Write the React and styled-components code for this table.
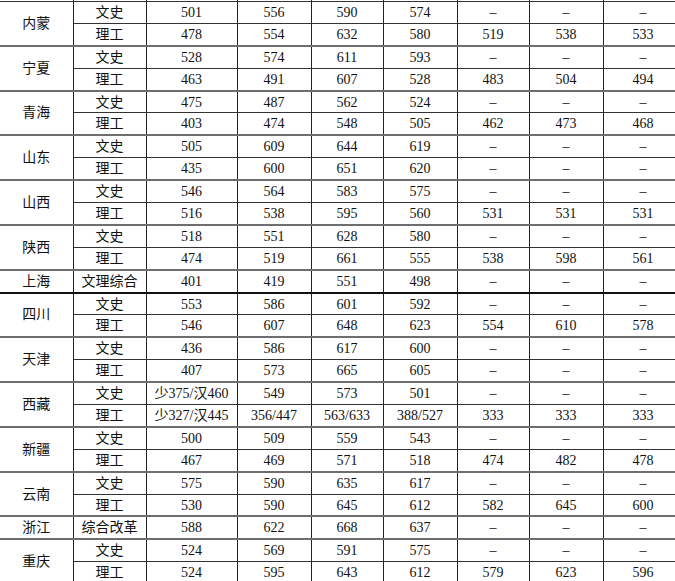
import styled, { createGlobalStyle } from 'styled-components';

const GlobalStyle = createGlobalStyle`
  html, body {
    margin: 0;
    padding: 0;
    background: #ffffff;
  }
`;

const Page = styled.div`
  width: 675px;
  height: 581px;
  overflow: hidden;
  background: #ffffff;
`;

const Table = styled.table`
  border-collapse: collapse;
  table-layout: fixed;
  width: 683px;
  color: #111;
  font-family: "Liberation Serif", "Noto Sans CJK SC", serif;
`;

const CutRow = styled.tr`
  td {
    padding: 0;
    height: 1px;
    line-height: 0;
    border-left: 1px solid #222;
    border-right: 1px solid #222;
    border-bottom: 1px solid #333;
  }
  td:first-child {
    border-left: none;
  }
`;

const Cell = styled.td`
  padding: 1px 0 0;
  height: 19.9px;
  text-align: center;
  vertical-align: middle;
  white-space: nowrap;
  overflow: hidden;
  font-size: 14px;
  line-height: 14px;
  border-left: 1px solid #222;
  border-right: 1px solid #222;
  border-top: ${(p) =>
    p.$groupTop ? `2px solid ${p.$heavy ? '#111' : '#6e6e6e'}` : '1px solid #333'};
  border-bottom: 1px solid #333;

  &:first-child {
    border-left: none;
  }
`;

const widths = [73, 73, 91, 74, 72, 74, 72, 74, 80];

const D = '–';

const provinces = [
  { name: '内蒙', rows: [['文史', '501', '556', '590', '574', D, D, D], ['理工', '478', '554', '632', '580', '519', '538', '533']] },
  { name: '宁夏', rows: [['文史', '528', '574', '611', '593', D, D, D], ['理工', '463', '491', '607', '528', '483', '504', '494']] },
  { name: '青海', rows: [['文史', '475', '487', '562', '524', D, D, D], ['理工', '403', '474', '548', '505', '462', '473', '468']] },
  { name: '山东', rows: [['文史', '505', '609', '644', '619', D, D, D], ['理工', '435', '600', '651', '620', D, D, D]] },
  { name: '山西', rows: [['文史', '546', '564', '583', '575', D, D, D], ['理工', '516', '538', '595', '560', '531', '531', '531']] },
  { name: '陕西', rows: [['文史', '518', '551', '628', '580', D, D, D], ['理工', '474', '519', '661', '555', '538', '598', '561']] },
  { name: '上海', rows: [['文理综合', '401', '419', '551', '498', D, D, D]] },
  { name: '四川', heavy: true, rows: [['文史', '553', '586', '601', '592', D, D, D], ['理工', '546', '607', '648', '623', '554', '610', '578']] },
  { name: '天津', rows: [['文史', '436', '586', '617', '600', D, D, D], ['理工', '407', '573', '665', '605', D, D, D]] },
  { name: '西藏', rows: [['文史', '少375/汉460', '549', '573', '501', D, D, D], ['理工', '少327/汉445', '356/447', '563/633', '388/527', '333', '333', '333']] },
  { name: '新疆', rows: [['文史', '500', '509', '559', '543', D, D, D], ['理工', '467', '469', '571', '518', '474', '482', '478']] },
  { name: '云南', rows: [['文史', '575', '590', '635', '617', D, D, D], ['理工', '530', '590', '645', '612', '582', '645', '600']] },
  { name: '浙江', rows: [['综合改革', '588', '622', '668', '637', D, D, D]] },
  { name: '重庆', rows: [['文史', '524', '569', '591', '575', D, D, D], ['理工', '524', '595', '643', '612', '579', '623', '596']] },
];

export default function App() {
  return (
    <>
      <GlobalStyle />
      <Page>
        <Table>
          <colgroup>
            {widths.map((w, i) => (
              <col key={i} style={{ width: w }} />
            ))}
          </colgroup>
          <tbody>
            <CutRow>
              {widths.map((_, i) => (
                <td key={i} />
              ))}
            </CutRow>
            {provinces.map((p, pi) =>
              p.rows.map((r, ri) => (
                <tr key={`${pi}-${ri}`}>
                  {ri === 0 && (
                    <Cell
                      $groupTop={pi > 0}
                      $heavy={p.heavy}
                      rowSpan={p.rows.length}
                    >
                      {p.name}
                    </Cell>
                  )}
                  {r.map((v, ci) => (
                    <Cell
                      key={ci}
                      $groupTop={ri === 0 && pi > 0}
                      $heavy={ri === 0 && p.heavy}
                    >
                      {v}
                    </Cell>
                  ))}
                </tr>
              ))
            )}
          </tbody>
        </Table>
      </Page>
    </>
  );
}
